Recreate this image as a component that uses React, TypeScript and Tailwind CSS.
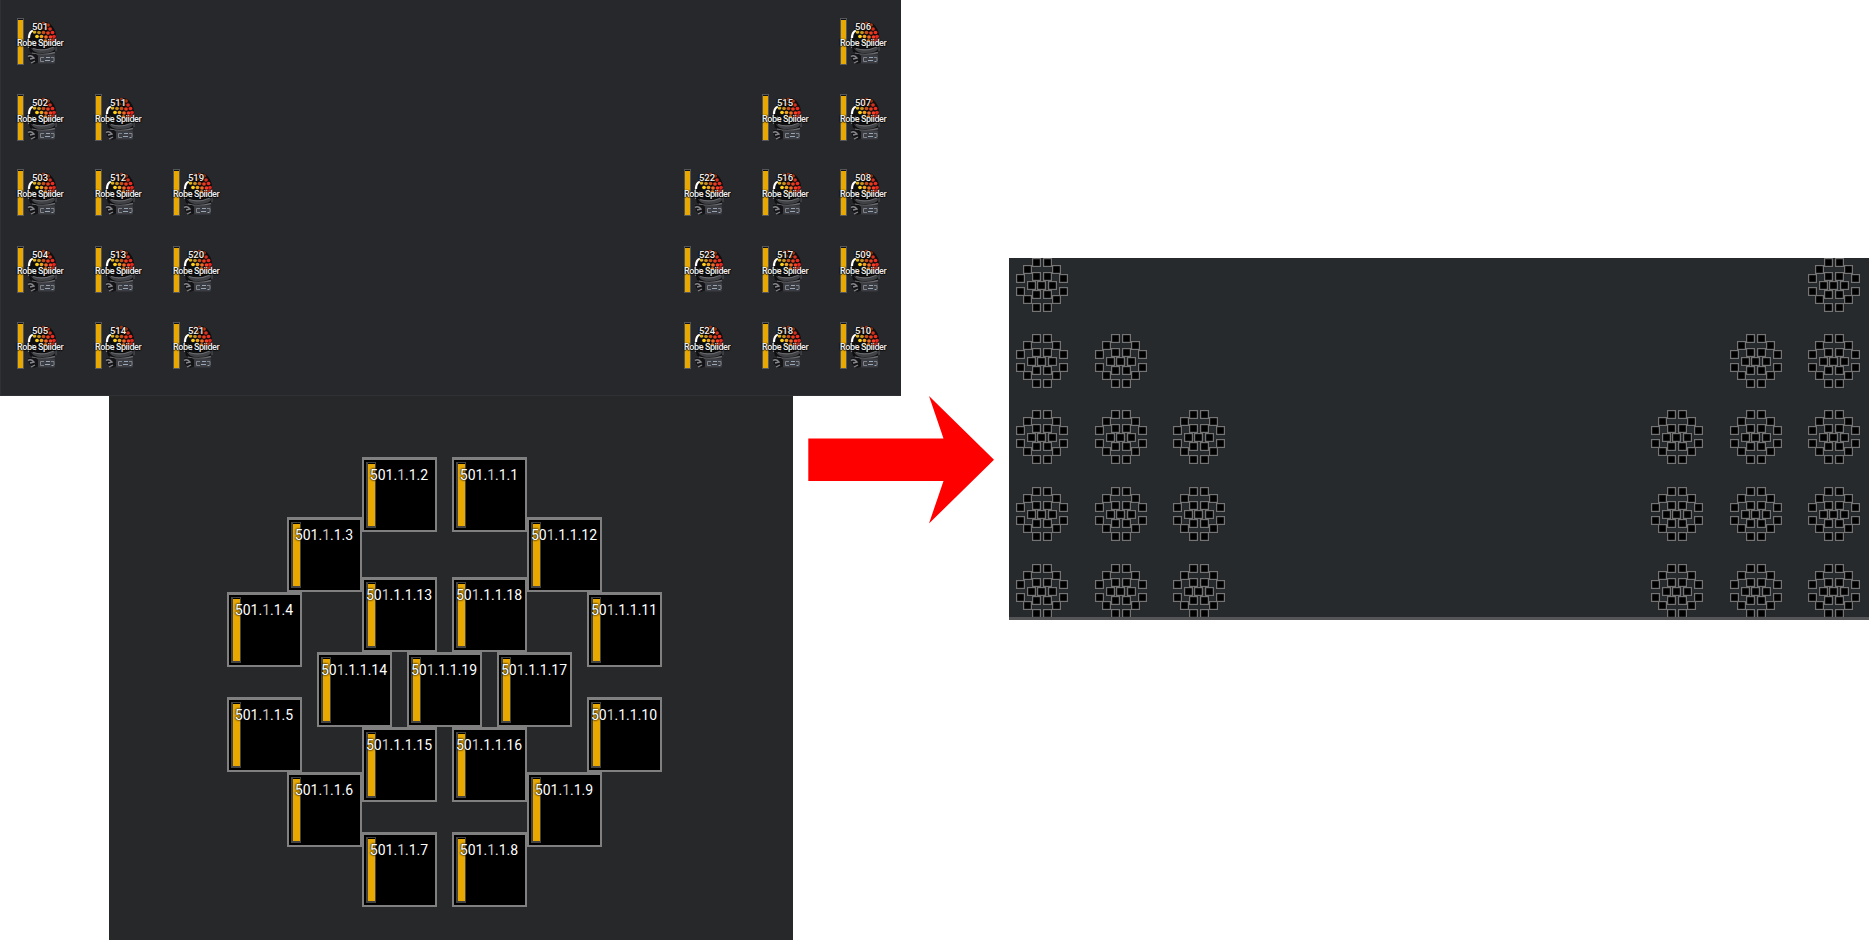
const IDS: (string | null)[][] = [
  ["501", null, null, null, null, "506"],
  ["502", "511", null, null, "515", "507"],
  ["503", "512", "519", "522", "516", "508"],
  ["504", "513", "520", "523", "517", "509"],
  ["505", "514", "521", "524", "518", "510"],
];

const CELLS: [number, number, number][] = [
  [1, 225, 0], [2, 135, 0], [3, 60, 60], [4, 0, 135], [5, 0, 240],
  [6, 60, 315], [7, 135, 375], [8, 225, 375], [9, 300, 315], [10, 360, 240],
  [11, 360, 135], [12, 300, 60], [13, 135, 120], [18, 225, 120], [14, 90, 195],
  [19, 180, 195], [17, 270, 195], [15, 135, 270], [16, 225, 270],
];

const LEDS: [number, number, string][] = [
  [22, 6, "#7a3010"], [26.5, 5.5, "#a03412"], [31, 7, "#b83818"],
  [19.5, 9.5, "#8a5a18"], [24, 10, "#9c4a14"], [28.5, 10.5, "#b84414"], [33, 11, "#d83020"],
  [17.5, 14, "#e0b41c"], [22, 14.5, "#c8901c"], [26.5, 14.5, "#c85018"], [31, 15, "#ee3c1c"], [35.5, 14.5, "#f02c20"],
  [20, 18.5, "#ffd21c"], [24.5, 18.5, "#f0a41c"], [29, 19, "#f46a24"], [33.5, 19, "#fa3c24"], [37, 18.5, "#e02820"],
  [24, 22.5, "#ffb820"], [28.5, 23, "#f48a28"], [33, 23, "#f45024"], [36.5, 22, "#d83018"],
];

const OUTLINE = "[text-shadow:1px_0_1px_#000c,-1px_0_1px_#000c,0_1px_1px_#000c]";

function Fixture({ id }: { id: string }) {
  return (
    <div className="relative h-[47px] w-[46px]">
      <div className="h-[47px] w-[7px] border border-[#55565a] bg-[#e8a800] shadow-[inset_0_1px_0_#111]" />
      <svg className="absolute inset-0" width="46" height="47" viewBox="0 0 46 47">
        <path d="M11 26Q10 14 17 9Q24 2 32 5Q41 11 39 27L38 34Q26 39 13 34Z" fill="#0f0f10" />
        <path d="M11.5 30V18" stroke="#85868a" strokeWidth="1.2" />
        <path d="M12 20Q12 14 16 12.5" fill="none" stroke="#fff" strokeWidth="2.2" />
        <path d="M15 23L19 28" stroke="#b9babd" strokeWidth="1.4" />
        <path d="M14 30Q17 36 26 35Q38 35 38.5 29Q28 33 19 31Z" fill="#404145" />
        <path d="M16 30.5Q26 34 37 29M15 35Q25 38 38 34.5" fill="none" stroke="#6a6b70" strokeWidth="1.3" />
        <path d="M39 20V33" stroke="#55565a" strokeWidth="1" />
        {LEDS.map(([cx, cy, c]) => (
          <ellipse key={`${cx}-${cy}`} cx={cx} cy={cy} rx="1.9" ry="1.8" fill={c} />
        ))}
        <path d="M11 36h8l3 3v5l-5 2-5-4z" fill="#141416" />
        <path d="M11 38.5Q14 36.5 17 40L13 41M14 45L18 43" stroke="#86878c" fill="none" strokeWidth="1.3" />
        <rect x="21" y="36.500" width="17" height="9" rx="1" fill="#3c3d43" />
        <path d="M23.5 43.5V39.5H27M23.5 43.5H27M34 39.5h3v3.5" stroke="#80848c" fill="none" />
        <path d="M29 39.5h4M28 42.5h5M34.5 43.5h2" stroke="#96a6b6" />
      </svg>
      <span className={`absolute inset-x-0 top-[3px] text-center text-[9.5px] font-medium leading-[12px] text-[#eee] ${OUTLINE}`}>{id}</span>
      <span className={`absolute left-0 top-[19px] whitespace-nowrap text-[9px] font-medium leading-[12px] tracking-[-0.4px] text-[#eee] ${OUTLINE}`}>Robe Spiider</span>
    </div>
  );
}

function PixelCell({ n, x, y }: { n: number; x: number; y: number }) {
  const label = `501.1.1.${n}`;
  const dim = n < 10 ? 4 : 2;
  return (
    <div className="absolute h-[75px] w-[75px] border-2 border-t-3 border-[#808080] bg-black p-0.5" style={{ left: x, top: y }}>
      <div className="h-[66px] w-[10px] border-2 border-r border-t border-[#444] bg-[#e8a800] shadow-[inset_0_1px_0_#000]" />
      <span className="absolute -left-[5px] -right-1 top-[7px] whitespace-nowrap text-center text-[14px] leading-[16px] text-white [text-shadow:0_0_2px_#000,0_0_2px_#000]">
        {label.slice(0, dim)}
        <span className="text-[#c4c4c4]">{label[dim]}</span>
        {label.slice(dim + 1)}
      </span>
    </div>
  );
}

function MiniCluster() {
  return (
    <svg className="-mr-4" width="53" height="55" viewBox="0 0 53 55">
      {CELLS.map(([n, cx, cy]) => (
        <g key={n}>
          <rect x={Math.round(cx * 0.119)} y={Math.round(cy * 0.119)} width="9" height="9" fill="#747474" />
          <rect x={Math.round(cx * 0.119) + 1.2} y={Math.round(cy * 0.119) + 1.2} width="6.6" height="6.6" fill="#000" />
        </g>
      ))}
    </svg>
  );
}

export default function App() {
  return (
    <main className="flex h-[940px] w-[1869px] overflow-hidden bg-white font-[Roboto,sans-serif]">
      <div className="flex w-[901px] shrink-0 flex-col">
        <section className="grid h-[396px] shrink-0 grid-cols-[78px_78px_511px_78px_78px_46px] grid-rows-[76px_75px_77px_76px_47px] border-b border-l border-[#303134] bg-[#27282c] pl-4 pt-[18px]">
          {IDS.flatMap((row, r) => row.map((id, c) => (id ? <Fixture key={id} id={id} /> : <div key={`${r}-${c}`} />)))}
        </section>
        <div className="flex h-[544px]">
          <section className="relative ml-[109px] w-[684px] shrink-0 bg-[#27282a]">
            {CELLS.map(([n, x, y]) => (
              <PixelCell key={n} n={n} x={x + 118} y={y + 61} />
            ))}
          </section>
          <svg className="ml-[15px] shrink-0" width="187" height="128" viewBox="0 0 187 128">
            <path d="M0.3 42.5H135.5L121 0L186 63.7L121 127.5L135.5 85H0.3Z" fill="#f00" />
          </svg>
        </div>
      </div>
      <section className="ml-[108px] mt-[258px] grid h-[362px] w-[860px] shrink-0 grid-cols-[79px_78px_478px_79px_78px_53px] grid-rows-[76px_76px_77px_77px_53px] overflow-hidden border-b-3 border-[#555558] bg-[#272a2c] pl-[7px]">
        {IDS.flatMap((row, r) => row.map((id, c) => (id ? <MiniCluster key={id} /> : <div key={`${r}-${c}`} />)))}
      </section>
    </main>
  );
}
